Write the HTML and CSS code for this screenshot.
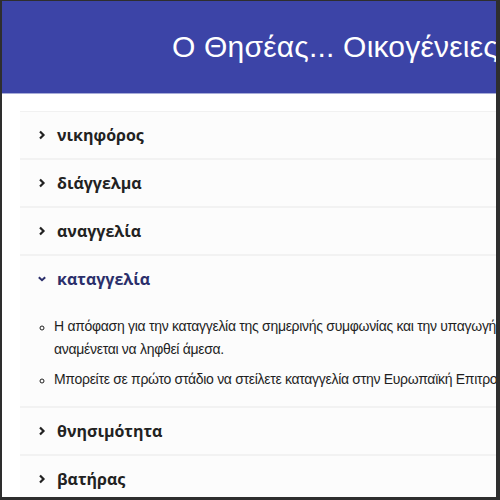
FILE: index.html
```html
<!DOCTYPE html>
<html lang="el">
<head>
   <meta charset="UTF-8">
   <meta name="viewport" content="width=device-width, initial-scale=1.0">
   <title>Ο Θησέας... Οικογένειες</title>
   <link rel="stylesheet" href="styles.css">
</head>
<body>
   <div class="frame">
      <header class="top-bar">
         <h1>Ο Θησέας... Οικογένειες</h1>
      </header>
      <main class="content">
         <div class="accordion">
            <div class="item">
               <div class="item-head">
                  <svg class="chevron" width="8" height="10" viewBox="0 0 8 10"><path d="M2 1.5 L5.5 5 L2 8.5" fill="none" stroke="currentColor" stroke-width="2.2"/></svg>νικηφόρος
               </div>
            </div>
            <div class="item">
               <div class="item-head">
                  <svg class="chevron" width="8" height="10" viewBox="0 0 8 10"><path d="M2 1.5 L5.5 5 L2 8.5" fill="none" stroke="currentColor" stroke-width="2.2"/></svg>διάγγελμα
               </div>
            </div>
            <div class="item">
               <div class="item-head">
                  <svg class="chevron" width="8" height="10" viewBox="0 0 8 10"><path d="M2 1.5 L5.5 5 L2 8.5" fill="none" stroke="currentColor" stroke-width="2.2"/></svg>αναγγελία
               </div>
            </div>
            <div class="item open">
               <div class="item-head">
                  <svg class="chevron" width="8" height="10" viewBox="0 0 8 10"><path d="M0.8 3.2 L4 6.2 L7.2 3.2" fill="none" stroke="currentColor" stroke-width="2"/></svg>καταγγελία
               </div>
               <ul class="item-body">
                  <li>Η απόφαση για την καταγγελία της σημερινής συμφωνίας και την υπαγωγή<br>αναμένεται να ληφθεί άμεσα.</li>
                  <li>Μπορείτε σε πρώτο στάδιο να στείλετε καταγγελία στην Ευρωπαϊκή Επιτροπή.</li>
               </ul>
            </div>
            <div class="item">
               <div class="item-head">
                  <svg class="chevron" width="8" height="10" viewBox="0 0 8 10"><path d="M2 1.5 L5.5 5 L2 8.5" fill="none" stroke="currentColor" stroke-width="2.2"/></svg>θνησιμότητα
               </div>
            </div>
            <div class="item">
               <div class="item-head">
                  <svg class="chevron" width="8" height="10" viewBox="0 0 8 10"><path d="M2 1.5 L5.5 5 L2 8.5" fill="none" stroke="currentColor" stroke-width="2.2"/></svg>βατήρας
               </div>
            </div>
         </div>
      </main>
   </div>
</body>
</html>
```

FILE: styles.css
```css
html, body {
   margin: 0;
   height: 100%;
}

body {
   font-family: "Liberation Sans", Arial, sans-serif;
   background: #ffffff;
   overflow: hidden;
}

.frame {
   box-sizing: border-box;
   height: 500px;
   width: 500px;
   border-style: solid;
   border-color: #2e2e2e;
   border-width: 1px 4px 3px 2px;
   overflow: hidden;
}

.top-bar {
   background: #3c44a7;
   height: 92px;
   border-bottom: 1px solid #a7acd8;
   display: flex;
   align-items: center;
   padding-left: 170px;
   white-space: nowrap;
}

.top-bar h1 {
   margin: 0;
   color: #ffffff;
   font-family: "Liberation Sans", sans-serif;
   font-weight: normal;
   font-size: 30px;
   letter-spacing: 0.2px;
}

.content {
   padding: 17px 0 0 18px;
}

.accordion {
   width: 620px;
   border-top: 1px solid #f1f1f1;
}

.item {
   background: #fcfcfc;
   border-bottom: 2px solid #f2f2f2;
}

.item-head {
   height: 46px;
   display: flex;
   align-items: center;
   padding-left: 16px;
   font-family: "Open Sans", sans-serif;
   font-weight: bold;
   font-size: 16px;
   color: #222222;
}

.chevron {
   margin: 0 11px 0 2px;
}

.open .item-head {
   color: #2b2f6b;
}

.item-body {
   margin: 0;
   padding: 13px 0 15px 34px;
   list-style: circle;
   font-size: 14px;
   letter-spacing: -0.3px;
   line-height: 23px;
   color: #1f1f1f;
   white-space: nowrap;
}

.item-body li {
   margin-bottom: 7px;
}

.item-body li:last-child {
   margin-bottom: 0;
}

.item-body li::marker {
   font-size: 12px;
}
```
